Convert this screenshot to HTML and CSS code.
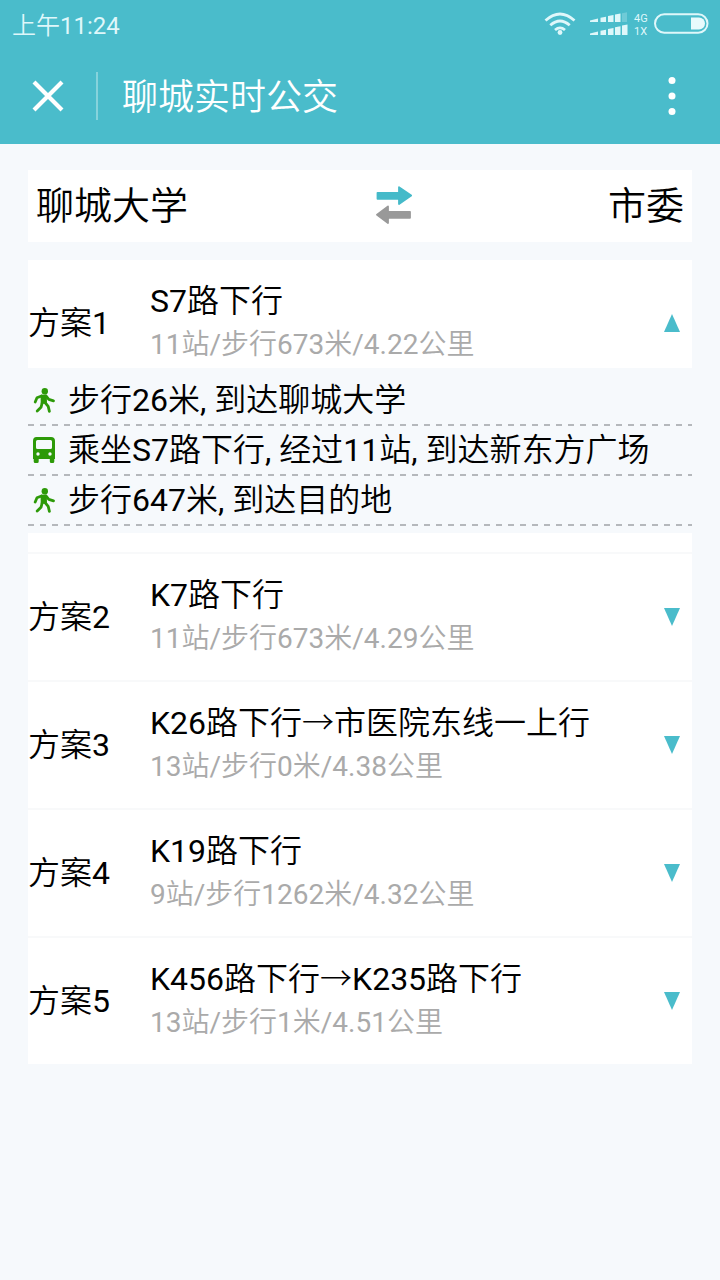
FILE: index.html
```html
<!DOCTYPE html>
<html lang="zh-CN">
<head>
<meta charset="utf-8">
<title>聊城实时公交</title>
<link rel="stylesheet" href="styles.css">
</head>
<body>
<svg class="defs" width="0" height="0">
  <symbol id="walk" viewBox="0 0 24 26">
    <circle cx="12.800" cy="4.300" r="3.200" fill="currentColor"/>
    <path d="M9.300 8.500 14 8.200l.2 7-4.700 1.300z" fill="currentColor" stroke="currentColor" stroke-width="1.500" stroke-linejoin="round"/>
    <path d="M9.500 9 5 10.800 3.200 15M14 9l2.800 3.300 4.700 1.500M10.300 15.500 9 20.300 5.200 24M13 15.500l3.200 3.800 1.200 5" fill="none" stroke="currentColor" stroke-width="2.800" stroke-linecap="round" stroke-linejoin="round"/>
  </symbol>
  <symbol id="bus" viewBox="0 0 24 26">
    <path fill="currentColor" fill-rule="evenodd" d="M4.500 0h14.500q4 0 4 4v18h-.7v2.500q0 1.500-1.500 1.500h-1.500q-1.500 0-1.500-1.500V22H6.700v2.500q0 1.500-1.500 1.500H3.200q-1.500 0-1.500-1.500V22H1V4q0-4 3.500-4zM5.500 3Q4 3 4 4.500v6Q4 12 5.500 12h13q1.500 0 1.500-1.500v-6Q20 3 18.500 3zM6 15.300a1.700 1.700 0 1 0 0 3.400 1.700 1.700 0 0 0 0-3.400zM18 15.300a1.700 1.700 0 1 0 0 3.400 1.700 1.700 0 0 0 0-3.400z"/>
  </symbol>
</svg>
<header class="header">
  <div class="status">
    <span class="clock">上午11:24</span>
    <svg class="wifi" width="32" height="24" viewBox="0 0 32 24" fill="none" stroke="#dff7fa" stroke-width="2.800">
      <path d="M1.500 8.500q14.500-13 29 0M6.300 13.300q9.700-8.500 19.400 0M11 18q5-4.200 10 0"/>
      <circle cx="16" cy="20.500" r="2.400" fill="#dff7fa" stroke="none"/>
    </svg>
    <svg class="signal" width="38" height="24" viewBox="0 0 38 24" fill="#dff7fa">
      <path d="M0 8.500l8-2v3.500H0zM10.500 5.700l5.500-1V10h-5.500zM18 4l5.500-1v7H18zM25 2.500l5.500-1V10H25z"/>
      <path d="M32 1.200l5-1V10h-5z" opacity=".25"/>
      <path d="M0 21.500l8-2V23H0zM10.500 18.700l5.500-1V23h-5.500zM18 17l5.500-1v7H18zM25 15.200l5.500-1V23H25zM32 13.500l5.500-1V23H32z"/>
    </svg>
    <span class="network"><span>4G</span><span>1X</span></span>
    <svg class="battery" width="55" height="22" viewBox="0 0 55 22">
      <rect x="1" y="1.200" width="52.500" height="18.600" rx="9.300" fill="none" stroke="#dff7fa" stroke-width="2"/>
      <path d="M37 4.500h8a6 6 0 0 1 0 12h-8z" fill="#e8fafc"/>
    </svg>
  </div>
  <div class="nav">
    <svg class="close" width="32" height="32" viewBox="0 0 32 32"><path d="M2 2l28 28M30 2L2 30" stroke="#fff" stroke-width="4.200"/></svg>
    <span class="divider"></span>
    <h1 class="title">聊城实时公交</h1>
    <svg class="more" width="8" height="40" viewBox="0 0 8 40" fill="#fff"><circle cx="4" cy="4.500" r="3.500"/><circle cx="4" cy="20" r="3.500"/><circle cx="4" cy="35.500" r="3.500"/></svg>
  </div>
</header>
<main class="content">
  <section class="route">
    <span>聊城大学</span>
    <svg class="swap" width="36" height="38" viewBox="0 0 36 38" stroke-linejoin="round">
      <path d="M1.500 6.800h21.500V1.200L35.200 9.500 23 18v-5.200H1.500z" fill="#45bac9" stroke="#45bac9" stroke-width="1.800"/>
      <path d="M34 25.800H12v-5.300L1 28.800 12 37v-5.200h22z" fill="#999" stroke="#999" stroke-width="1.800"/>
    </svg>
    <span class="destination">市委</span>
  </section>
  <section class="plans">
    <article class="plan expanded">
      <div class="summary">
        <span class="number">方案1</span>
        <div class="info"><div class="line">S7路下行</div><div class="meta">11站/步行673米/4.22公里</div></div>
        <span class="toggle up"></span>
      </div>
      <ol class="steps">
        <li class="step"><svg class="icon" width="24" height="26"><use href="#walk"/></svg>步行26米, 到达聊城大学</li>
        <li class="step"><svg class="icon" width="24" height="26"><use href="#bus"/></svg>乘坐S7路下行, 经过11站, 到达新东方广场</li>
        <li class="step"><svg class="icon" width="24" height="26"><use href="#walk"/></svg>步行647米, 到达目的地</li>
      </ol>
    </article>
    <article class="plan"><div class="summary">
      <span class="number">方案2</span>
      <div class="info"><div class="line">K7路下行</div><div class="meta">11站/步行673米/4.29公里</div></div>
      <span class="toggle"></span>
    </div></article>
    <article class="plan"><div class="summary">
      <span class="number">方案3</span>
      <div class="info"><div class="line">K26路下行<span class="arrow">→</span>市医院东线一上行</div><div class="meta">13站/步行0米/4.38公里</div></div>
      <span class="toggle"></span>
    </div></article>
    <article class="plan"><div class="summary">
      <span class="number">方案4</span>
      <div class="info"><div class="line">K19路下行</div><div class="meta">9站/步行1262米/4.32公里</div></div>
      <span class="toggle"></span>
    </div></article>
    <article class="plan"><div class="summary">
      <span class="number">方案5</span>
      <div class="info"><div class="line">K456路下行<span class="arrow">→</span>K235路下行</div><div class="meta">13站/步行1米/4.51公里</div></div>
      <span class="toggle"></span>
    </div></article>
  </section>
</main>
</body>
</html>
```
FILE: styles.css
```css
* { box-sizing: border-box; }
body {
  margin: 0;
  min-height: 1280px;
  background: #f6f9fc;
  color: #000;
  font-family: Roboto, "Noto Sans CJK SC DemiLight", "Noto Sans CJK SC", sans-serif;
  font-size: 32px;
  font-weight: 400;
}
svg { display: block; flex: none; }
.defs { position: absolute; }
.header { height: 144px; background: #4abccb; color: #fff; }
.status { height: 48px; padding: 0 12px; display: flex; align-items: center; color: #dff7fa; }
.clock { font-size: 24px; line-height: 43px; padding-top: 5px; margin-right: auto; }
.wifi { margin-right: 14px; }
.signal { margin-right: 6px; }
.network { display: flex; flex-direction: column; width: 20px; padding-top: 2px; font-size: 11px; line-height: 13px; }
.battery { margin-right: -1px; }
.nav { height: 96px; padding: 0 44px 0 32px; display: flex; align-items: center; }
.divider { width: 2px; height: 48px; margin: 0 24px 0 32px; background: #86d3dc; }
.title { margin: 0 auto 0 0; padding-top: 4px; font-size: 36px; font-weight: 400; line-height: 48px; }
.content { padding: 26px 28px 0; }
.route {
  height: 72px;
  padding: 0 8px;
  display: grid;
  grid-template-columns: 1fr auto 1fr;
  align-items: center;
  background: #fff;
  font-size: 38px;
  line-height: 72px;
}
.swap { margin-right: -34px; transform: translate(17px, -1px); }
.destination { text-align: right; }
.plans { margin-top: 18px; }
.plan { background: #fff; border-bottom: 2px solid #f8f9fa; }
.plan:last-child { border-bottom: 0; }
.summary { height: 126px; padding-right: 12px; display: flex; align-items: center; }
.expanded { padding-bottom: 19px; }
.expanded .summary { margin-bottom: -18px; }
.number { width: 122px; line-height: 48px; }
.info { flex: 1; }
.line { line-height: 43px; }
.meta { font-size: 28px; line-height: 43px; color: #aaa; }
.arrow { font-family: "Noto Sans CJK SC Light", "Noto Sans CJK SC", sans-serif; line-height: 1; }
.toggle { width: 16px; height: 18px; background: #4abccb; clip-path: polygon(0 0, 100% 0, 50% 100%); }
.toggle.up { clip-path: polygon(50% 0, 100% 100%, 0 100%); }
.steps { position: relative; margin: 0; padding: 8px 0 7px; list-style: none; background: #f6f9fc; }
.step {
  height: 50px;
  padding: 0 0 2px 4px;
  display: flex;
  align-items: center;
  line-height: 46px;
  white-space: pre;
  background: repeating-linear-gradient(to right, #b5b8bc 0 6px, transparent 6px 12px) 0 100% / 100% 2px no-repeat;
}
.icon { margin-right: 12px; color: #2d9a08; }
```
